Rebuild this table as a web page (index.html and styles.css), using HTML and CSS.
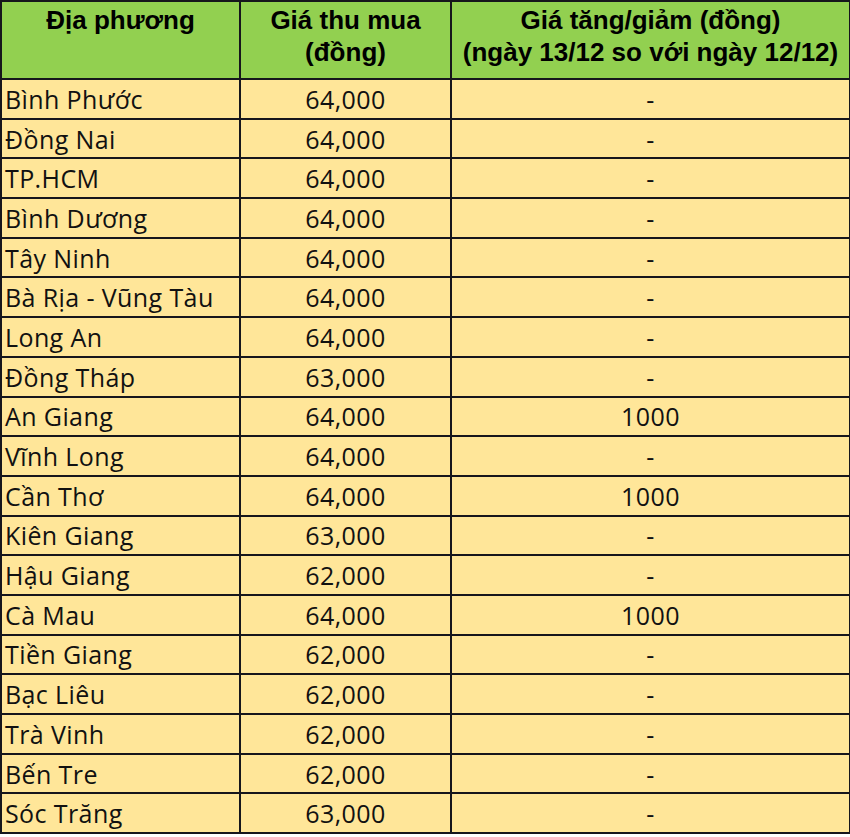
FILE: index.html
```html
<!DOCTYPE html>
<html lang="vi">
<head>
<meta charset="utf-8">
<link rel="stylesheet" href="styles.css">
</head>
<body>
<table class="price">
  <colgroup>
    <col class="c1"><col class="c2"><col class="c3">
  </colgroup>
  <thead>
    <tr>
      <th>Địa phương</th>
      <th>Giá thu mua<br>(đồng)</th>
      <th>Giá tăng/giảm (đồng)<br>(ngày 13/12 so với ngày 12/12)</th>
    </tr>
  </thead>
  <tbody>
    <tr><td class="name">Bình Phước</td><td>64,000</td><td>-</td></tr>
    <tr><td class="name">Đồng Nai</td><td>64,000</td><td>-</td></tr>
    <tr><td class="name">TP.HCM</td><td>64,000</td><td>-</td></tr>
    <tr><td class="name">Bình Dương</td><td>64,000</td><td>-</td></tr>
    <tr><td class="name">Tây Ninh</td><td>64,000</td><td>-</td></tr>
    <tr><td class="name">Bà Rịa - Vũng Tàu</td><td>64,000</td><td>-</td></tr>
    <tr><td class="name">Long An</td><td>64,000</td><td>-</td></tr>
    <tr><td class="name">Đồng Tháp</td><td>63,000</td><td>-</td></tr>
    <tr><td class="name">An Giang</td><td>64,000</td><td>1000</td></tr>
    <tr><td class="name">Vĩnh Long</td><td>64,000</td><td>-</td></tr>
    <tr><td class="name">Cần Thơ</td><td>64,000</td><td>1000</td></tr>
    <tr><td class="name">Kiên Giang</td><td>63,000</td><td>-</td></tr>
    <tr><td class="name">Hậu Giang</td><td>62,000</td><td>-</td></tr>
    <tr><td class="name">Cà Mau</td><td>64,000</td><td>1000</td></tr>
    <tr><td class="name">Tiền Giang</td><td>62,000</td><td>-</td></tr>
    <tr><td class="name">Bạc Liêu</td><td>62,000</td><td>-</td></tr>
    <tr><td class="name">Trà Vinh</td><td>62,000</td><td>-</td></tr>
    <tr><td class="name">Bến Tre</td><td>62,000</td><td>-</td></tr>
    <tr><td class="name">Sóc Trăng</td><td>63,000</td><td>-</td></tr>
  </tbody>
</table>
</body>
</html>
```

FILE: styles.css
```css
html, body {
  margin: 0;
  padding: 0;
  background: #ffffff;
}

.price {
  border-collapse: collapse;
  table-layout: fixed;
  width: 849px;
}

.c1 { width: 239px; }
.c2 { width: 211px; }
.c3 { width: 399px; }

.price th,
.price td {
  border: 2px solid #16161c;
  padding: 0;
}

.price th {
  background: #92d050;
  color: #000;
  font-family: "Liberation Sans", Arial, sans-serif;
  font-weight: bold;
  font-size: 26px;
  line-height: 32px;
  height: 74px;
  vertical-align: top;
  text-align: center;
  padding-top: 2px;
  white-space: nowrap;
}

.price td {
  background: #ffe699;
  color: #111;
  font-family: "Open Sans", "Noto Sans", sans-serif;
  font-size: 25px;
  letter-spacing: 0.4px;
  height: 37.7px;
  text-align: center;
  vertical-align: middle;
}

.price td.name {
  text-align: left;
  padding-left: 3px;
}
```
